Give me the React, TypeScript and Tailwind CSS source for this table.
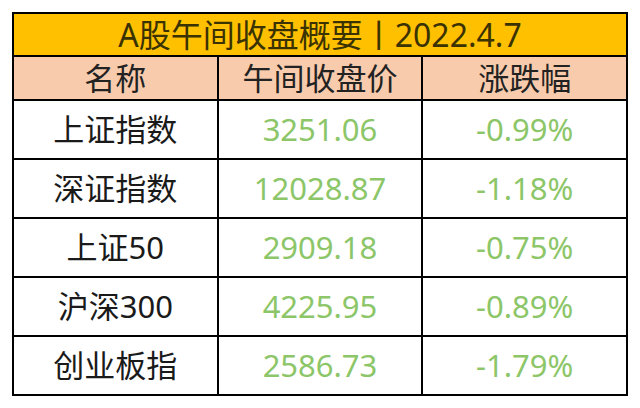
const rows = [
  { name: "上证指数", price: "3251.06", change: "-0.99%" },
  { name: "深证指数", price: "12028.87", change: "-1.18%" },
  { name: "上证50", price: "2909.18", change: "-0.75%" },
  { name: "沪深300", price: "4225.95", change: "-0.89%" },
  { name: "创业板指", price: "2586.73", change: "-1.79%" },
];

const font = { fontFamily: '"Noto Sans", "Noto Sans CJK SC", sans-serif' };

const App = () => {
  return (
    <div className="w-[640px] h-[408px] bg-white pl-[12px] pt-[12px]" style={font}>
      <table className="w-[616px] border-collapse border-2 border-black table-fixed">
        <thead>
          <tr className="h-[43px] bg-[#ffc000]">
            <th colSpan={3} className="border-2 border-black text-[32px] leading-none font-normal text-[#3a3200]">
              A股午间收盘概要丨2022.4.7
            </th>
          </tr>
          <tr className="h-[44px] bg-[#f8cbad]">
            <th className="border-2 border-black text-[31px] leading-none font-normal text-[#222]">名称</th>
            <th className="border-2 border-black text-[31px] leading-none font-normal text-[#222]">午间收盘价</th>
            <th className="border-2 border-black text-[31px] leading-none font-normal text-[#222]">涨跌幅</th>
          </tr>
        </thead>
        <tbody>
          {rows.map((r) => (
            <tr key={r.name} className="h-[59px]">
              <td className="border-2 border-black text-center text-[31px] leading-none text-[#1a1a1a]">{r.name}</td>
              <td className="border-2 border-black text-center text-[31px] leading-none text-[#8cc668]">{r.price}</td>
              <td className="border-2 border-black text-center text-[31px] leading-none text-[#8cc668]">{r.change}</td>
            </tr>
          ))}
        </tbody>
      </table>
    </div>
  );
};

export default App;
